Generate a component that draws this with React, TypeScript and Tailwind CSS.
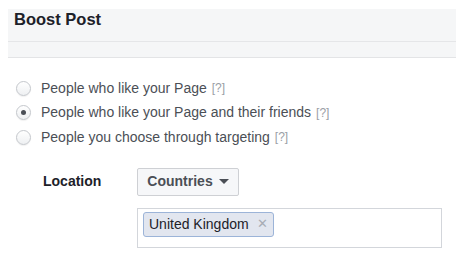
import { useState } from "react";

const OPCIONES = [
  "People who like your Page",
  "People who like your Page and their friends",
  "People you choose through targeting",
];

function Radio({ checked }: { checked: boolean }) {
  return (
    <span className="w-[15px] h-[15px] rounded-full border border-[#c4c7cc] bg-gradient-to-b from-white to-[#eef0f2] shadow-[0_1px_1px_rgba(0,0,0,0.06)] flex items-center justify-center shrink-0">
      {checked && <span className="w-[5px] h-[5px] rounded-full bg-[#4b4f56]" />}
    </span>
  );
}

export default function App() {
  const [seleccion, setSeleccion] = useState(1);

  return (
    <div className="bg-white min-h-[258px] pt-[9px] px-[8px] font-['Liberation_Sans',Arial,sans-serif]">
      {/* Encabezado */}
      <div className="bg-[#f5f6f7] border-b border-[#e3e4e6]">
        <h1 className="h-[33px] px-[6px] text-[16.5px] leading-[20px] font-bold text-[#1d2129] border-b border-[#e5e6e8]">
          Boost Post
        </h1>
        <div className="h-[15px]" />
      </div>

      {/* Opciones */}
      <div className="mt-[18px] flex flex-col">
        {OPCIONES.map((texto, i) => (
          <button
            key={texto}
            onClick={() => setSeleccion(i)}
            className="h-[24.5px] flex items-center pl-[8px] text-left"
          >
            <Radio checked={seleccion === i} />
            <span className="ml-[10px] text-[14px] text-[#4b4f56]">{texto}</span>
            <span className="ml-[5px] text-[12px] text-[#9a9ea6]">[?]</span>
          </button>
        ))}
      </div>

      {/* Ubicación */}
      <div className="mt-[18px] flex">
        <div className="w-[129px] shrink-0 pl-[35px] pt-[3px] text-[14px] font-bold text-[#1d2129]">
          Location
        </div>
        <div className="flex-1 flex flex-col items-start">
          <button className="h-[28px] w-[102px] flex items-center justify-center gap-[6px] border border-[#ced0d4] rounded-[2px] bg-[#f6f7f9] text-[14px] font-bold text-[#4b4f56]">
            Countries
            <span className="w-0 h-0 border-l-[5px] border-r-[5px] border-t-[5px] border-l-transparent border-r-transparent border-t-[#4b4f56]" />
          </button>
          <div className="mt-[12px] w-[305px] h-[40px] border border-[#d3d6db] bg-white pt-[3px] pl-[5px]">
            <span className="inline-flex items-center h-[25px] px-[5px] rounded-[3px] border border-[#9cb4d8] bg-[#e2e6ef] text-[14px] text-[#1d2129]">
              United Kingdom
              <span className="ml-[8px] text-[13px] text-[#a8adb5]">✕</span>
            </span>
          </div>
        </div>
      </div>
    </div>
  );
}
